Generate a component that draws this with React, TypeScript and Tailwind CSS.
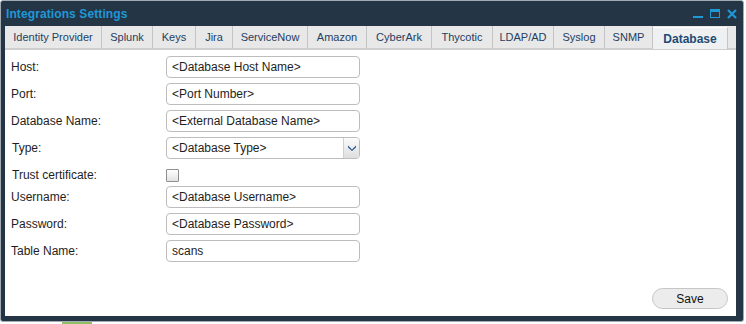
import { useState } from "react"

const tabs = [
  { name: "Identity Provider", w: "w-[97px]" },
  { name: "Splunk", w: "w-[51px]" },
  { name: "Keys", w: "w-[43px]" },
  { name: "Jira", w: "w-[37px]" },
  { name: "ServiceNow", w: "w-[75px]" },
  { name: "Amazon", w: "w-[59px]" },
  { name: "CyberArk", w: "w-[65px]" },
  { name: "Thycotic", w: "w-[61px]" },
  { name: "LDAP/AD", w: "w-[61px]" },
  { name: "Syslog", w: "w-[51px]" },
  { name: "SNMP", w: "w-[48px]" },
  { name: "Database", w: "w-[75px]" },
]

function Field({ label, value }: { label: string; value: string }) {
  return (
    <div className="flex items-center h-[22px] mt-[5px]">
      <div className="w-[155px] shrink-0">{label}</div>
      <input
        className="w-[194px] h-[22px] border border-[#bdbdbd] rounded-[4px] px-[5px] text-[#1e1e1e] outline-none bg-white"
        defaultValue={value}
      />
    </div>
  )
}

export default function App() {
  const [active] = useState("Database")
  const [trust, setTrust] = useState(false)

  return (
    <div className="w-[746px] h-[324px] bg-white overflow-hidden font-['Liberation_Sans',Arial,sans-serif] text-[12px] text-[#1e1e1e]">
      <div className="w-[744px] h-[322px] border border-[#a3abb2] rounded-[3px] bg-[#243546] flex flex-col pl-[4px] pr-[7px] pb-[5px]">
        {/* title bar */}
        <div className="h-[25px] shrink-0 flex items-center justify-between pl-[1px]">
          <span className="text-[12px] font-bold text-[#1f98d6] tracking-[0.1px]">Integrations Settings</span>
          <div className="flex items-center gap-[7px] mr-[-1px]">
            <div className="w-[10px] h-[9px] flex items-end">
              <div className="w-[10px] h-[2px] bg-[#1f98d6]" />
            </div>
            <div className="w-[10px] h-[9px] border border-t-[3px] border-[#1f98d6]" />
            <svg width="10" height="10" viewBox="0 0 10 10">
              <path d="M1 1 L9 9 M9 1 L1 9" stroke="#1f98d6" strokeWidth="2.2" />
            </svg>
          </div>
        </div>

        {/* tabs */}
        <div className="h-[24px] shrink-0 bg-[#e8e8e8] border-b-2 border-[#cfcfcf] flex text-[11px]">
          {tabs.map((t) => (
            <div
              key={t.name}
              className={
                t.name === active
                  ? `${t.w} h-full flex items-center justify-center bg-[#eef0f1] border-t border-t-white border-r border-r-[#c4c4c4] mt-[1px] font-bold text-[#1d4b74] text-[12px]`
                  : `${t.w} h-full flex items-center justify-center border-r border-[#c4c4c4] text-[#24405f]`
              }
            >
              {t.name}
            </div>
          ))}
        </div>

        {/* content */}
        <div className="flex-1 bg-white flex flex-col justify-between pl-[6px] pt-[1px] pb-[7px] pr-[8px]">
          <div className="flex flex-col">
            <Field label="Host:" value="<Database Host Name>" />
            <Field label="Port:" value="<Port Number>" />
            <Field label="Database Name:" value="<External Database Name>" />
            <div className="flex items-center h-[22px] mt-[5px]">
              <div className="w-[155px] shrink-0 pl-[1px]">Type:</div>
              <div className="w-[194px] h-[22px] border border-[#bdbdbd] rounded-[4px] flex items-center overflow-hidden">
                <span className="flex-1 pl-[5px]">&lt;Database Type&gt;</span>
                <div className="w-[16px] h-full border-l border-[#cfcfcf] bg-gradient-to-b from-[#fbfbfb] to-[#dedede] flex items-center justify-center">
                  <svg width="8" height="6" viewBox="0 0 8 6">
                    <path d="M0 0.5 L4 4.5 L8 0.5 L8 2.5 L4 6 L0 2.5 Z" fill="#2a5b94" />
                  </svg>
                </div>
              </div>
            </div>
            <div className="flex items-center h-[22px] mt-[5px]">
              <div className="w-[155px] shrink-0 pl-[1px]">Trust certificate:</div>
              <button
                onClick={() => setTrust(!trust)}
                className="w-[13px] h-[13px] border border-[#8e8e8e] rounded-[1px] bg-gradient-to-b from-[#ffffff] to-[#e2e2e2]"
              />
            </div>
            <div className="mt-[-5px]">
              <Field label="Username:" value="<Database Username>" />
            </div>
            <Field label="Password:" value="<Database Password>" />
            <Field label="Table Name:" value="scans" />
          </div>
          <div className="flex justify-end">
            <button className="w-[76px] h-[21px] rounded-full border border-[#c6c6c6] bg-[#ececec] text-[#111]">
              Save
            </button>
          </div>
        </div>
      </div>
      <div className="ml-[62px] w-[30px] h-[2px] bg-[#8cc063]" />
    </div>
  )
}
